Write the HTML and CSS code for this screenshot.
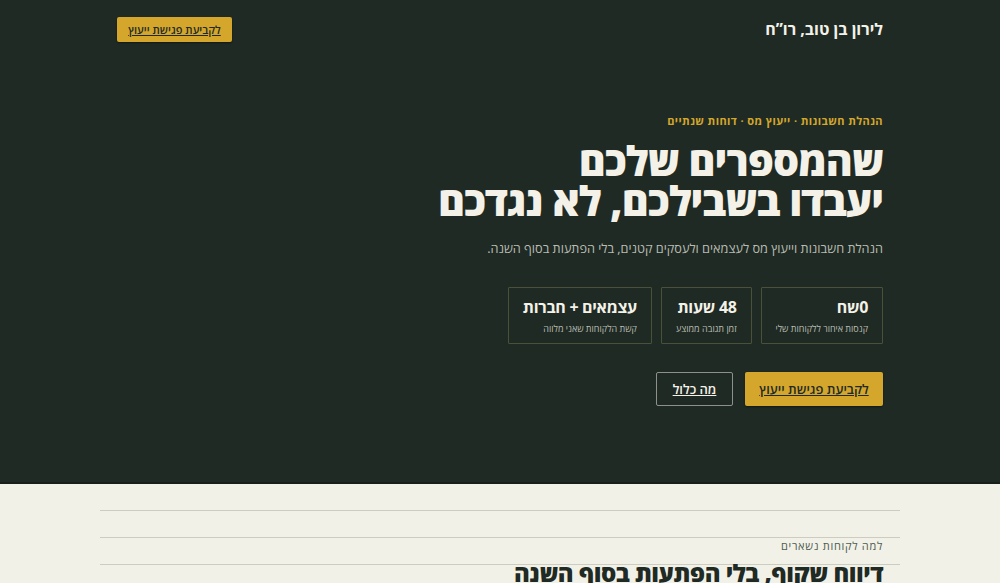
FILE: index.html
```html
<!DOCTYPE html>
<html lang="he" dir="rtl">
<head>
    <meta charset="UTF-8" />
    <meta name="viewport" content="width=device-width, initial-scale=1.0"/>
    <title>לירון בן טוב, רו"ח</title>
    <link rel="stylesheet" href="styles.css">
</head>
<body>
<section class="hero">
    <div class="container">
        <header class="topbar">
            <div class="brand">לירון בן טוב, רו”ח</div>
            <a href="#contact" class="btn btn-gold btn-small">לקביעת פגישת ייעוץ</a>
        </header>

        <div class="hero-body">
            <p class="eyebrow">הנהלת חשבונות · ייעוץ מס · דוחות שנתיים</p>
            <h1>שהמספרים שלכם<br>יעבדו בשבילכם, לא נגדכם</h1>
            <p class="lead">הנהלת חשבונות וייעוץ מס לעצמאים ולעסקים קטנים, בלי הפתעות בסוף השנה.</p>

            <div class="stats">
                <div class="stat">
                    <div class="stat-value">0שח</div>
                    <div class="stat-label">קנסות איחור ללקוחות שלי</div>
                </div>
                <div class="stat">
                    <div class="stat-value">48 שעות</div>
                    <div class="stat-label">זמן תגובה ממוצע</div>
                </div>
                <div class="stat">
                    <div class="stat-value">עצמאים + חברות</div>
                    <div class="stat-label">קשת הלקוחות שאני מלווה</div>
                </div>
            </div>

            <div class="actions">
                <a href="#contact" class="btn btn-gold">לקביעת פגישת ייעוץ</a>
                <a href="#services" class="btn btn-outline">מה כלול</a>
            </div>
        </div>
    </div>
</section>

<section class="why">
    <div class="container why-inner">
        <div class="why-spacer"></div>
        <p class="why-eyebrow">למה לקוחות נשארים</p>
        <h2>דיווח שקוף, בלי הפתעות בסוף השנה</h2>
    </div>
</section>
</body>
</html>
```

FILE: styles.css
```css
:root {
    --dark: #1f2a24;
    --gold: #d4a72c;
    --cream: #f2f1e7;
    --ink: #1f2a24;
    --muted: #b9bcb2;
    --line: #4b5039;
}
* {
    box-sizing: border-box;
    margin: 0;
    padding: 0;
}
body {
    font-family: "Open Sans", "Liberation Sans", sans-serif;
    background: var(--cream);
    color: var(--ink);
}
.container {
    width: 800px;
    margin: 0 auto;
    padding: 0 17px;
}
.hero {
    background: var(--dark);
    color: #f4f2e8;
    height: 484px;
    border-bottom: 2px solid #17201b;
}
.topbar {
    display: flex;
    justify-content: space-between;
    align-items: center;
    height: 58px;
}
.brand {
    font-size: 16px;
    font-weight: 700;
    color: #f4f2e8;
}
.btn {
    display: inline-flex;
    align-items: center;
    justify-content: center;
    font-family: inherit;
    text-decoration: underline;
    font-weight: 600;
    border-radius: 2px;
}
.btn-gold {
    background: var(--gold);
    color: #1f2a24;
    height: 34px;
    width: 138px;
    font-size: 13px;
    box-shadow: 0 1px 2px rgba(0, 0, 0, 0.4);
}
.btn-small {
    height: 25px;
    width: 115px;
    font-size: 11px;
}
.btn-outline {
    border: 1px solid #8e918a;
    color: #f4f2e8;
    height: 34px;
    width: 77px;
    font-size: 13px;
}
.hero-body {
    padding-top: 55px;
}
.eyebrow {
    color: var(--gold);
    font-size: 11px;
    font-weight: 700;
    letter-spacing: 0.4px;
}
h1 {
    margin-top: 12px;
    font-size: 41px;
    line-height: 40px;
    font-weight: 800;
    letter-spacing: -1px;
    color: #f4f2e8;
}
.lead {
    margin-top: 19px;
    font-size: 12.7px;
    color: var(--muted);
}
.stats {
    display: flex;
    gap: 9px;
    margin-top: 30px;
}
.stat {
    border: 1px solid var(--line);
    padding: 8px 14px 10px 14px;
    height: 57px;
    border-radius: 1px;
}
.stat-value {
    font-size: 16px;
    font-weight: 700;
    letter-spacing: -0.3px;
    color: #f4f2e8;
}
.stat-label {
    margin-top: 4px;
    font-size: 9px;
    color: var(--muted);
}
.actions {
    display: flex;
    gap: 12px;
    margin-top: 28px;
}
.why-inner {
    padding: 0;
    margin-top: 26px;
    background-image: repeating-linear-gradient(to bottom, #cdccc1 0, #cdccc1 1px, transparent 1px, transparent 27px);
}
.why-spacer {
    height: 27px;
}
.why-eyebrow {
    padding: 1px 17px 0;
    height: 27px;
    font-size: 11px;
    letter-spacing: 0.7px;
    color: #4d5d52;
}
h2 {
    margin-top: -4px;
    padding: 0 17px;
    font-size: 24px;
    line-height: 26px;
    font-weight: 800;
    letter-spacing: -0.5px;
    color: var(--ink);
}
```
